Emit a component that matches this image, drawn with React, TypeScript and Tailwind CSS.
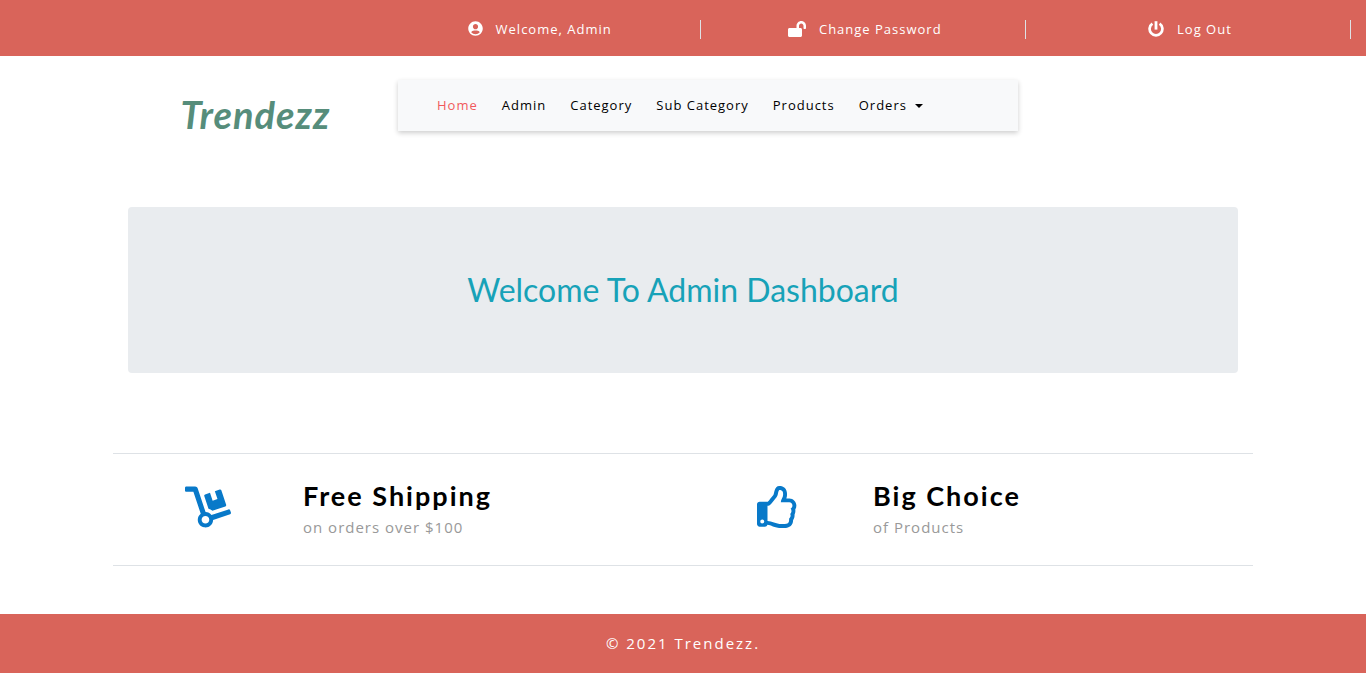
import { FaUserCircle, FaLockOpen, FaDolly, FaRegThumbsUp } from "react-icons/fa";

function PowerIcon({ className }: { className?: string }) {
  return (
    <svg viewBox="0 0 16 16" fill="none" stroke="currentColor" className={className} aria-hidden="true">
      <path d="M4.4 2.6A6.4 6.4 0 1 0 11.6 2.6" strokeWidth="2.7" />
      <path d="M8 0.2V8.6" strokeWidth="2.8" />
    </svg>
  );
}

const topLinks = [
  { label: "Welcome, Admin", Icon: FaUserCircle, size: "h-[15px] w-[15px]" },
  { label: "Change Password", Icon: FaLockOpen, size: "h-4 w-[18px]" },
  { label: "Log Out", Icon: PowerIcon, size: "h-4 w-4" },
];

const menu = ["Home", "Admin", "Category", "Sub Category", "Products"];

const features = [
  { title: "Free Shipping", text: "on orders over $100", Icon: FaDolly, size: "h-[42px] w-[46px]" },
  { title: "Big Choice", text: "of Products", Icon: FaRegThumbsUp, size: "h-[42px] w-[42px]" },
];

export default function App() {
  return (
    <div className="min-h-screen bg-white font-['Open_Sans',sans-serif] text-black">
      <header className="bg-[#d9645a] pt-5 pr-[15px] pb-[17px]">
        <ul className="ml-auto grid w-[72.2%] grid-cols-3">
          {topLinks.map(({ label, Icon, size }) => (
            <li key={label} className="border-r border-[#dee2e6] pl-1 text-center">
              <a href="#" className="flex h-[19px] items-center justify-center gap-[13px] text-[13px] leading-[19px] font-medium tracking-[1px] text-white">
                <span className="flex h-[19px] items-start pt-px">
                  <Icon className={size} />
                </span>
                {label}
              </a>
            </li>
          ))}
        </ul>
      </header>

      <div className="mx-auto flex max-w-[1140px] items-start pt-6">
        <h1 className="w-1/4 pt-1.5 text-center font-['Lato',sans-serif] text-[38px] leading-[56px] font-bold tracking-[1px] italic">
          <a href="#" className="text-[#568d7b]">Trendezz</a>
        </h1>
        <nav className="flex h-[51px] w-[620px] items-center gap-6 bg-[#f8f9fa] pl-[39px] text-[13px] tracking-[1px] shadow-[0_2px_5px_rgba(0,0,0,0.2)]">
          {menu.map((item, i) => (
            <a key={item} href="#" className={i === 0 ? "text-[#f1595d]" : "text-black"}>{item}</a>
          ))}
          <button type="button" className="flex items-center gap-2 tracking-[1px]">
            Orders
            <span className="border-x-4 border-t-4 border-x-transparent border-t-black" />
          </button>
        </nav>
      </div>

      <main className="mx-auto max-w-[1140px]">
        <section className="mx-[15px] mt-[65px] rounded bg-[#e9ecef] py-16 text-center">
          <h2 className="font-['Lato',sans-serif] text-[32px] leading-[38px] text-[#17a2b8]">Welcome To Admin Dashboard</h2>
        </section>
        <section className="mt-20 grid grid-cols-2 border-y border-[#dee2e6] py-6">
          {features.map(({ title, text, Icon, size }) => (
            <div key={title} className="flex">
              <div className="flex w-1/3 justify-center pt-2">
                <Icon className={`${size} text-[#0879c9]`} />
              </div>
              <div>
                <h3 className="font-['Lato',sans-serif] text-[27px] leading-[35px] font-bold tracking-[2px]">{title}</h3>
                <p className="text-[15px] leading-7 tracking-[1px] text-[#999]">{text}</p>
              </div>
            </div>
          ))}
        </section>
      </main>

      <footer className="mt-12 bg-[#d9645a] py-4 text-center text-[15px] leading-[27px] font-medium tracking-[2px] text-white">
        © 2021 Trendezz.
      </footer>
    </div>
  );
}
